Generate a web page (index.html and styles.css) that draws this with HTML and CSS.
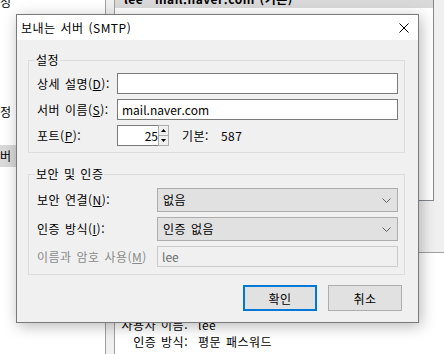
FILE: index.html
```html
<!DOCTYPE html>
<html lang="ko">

<head>
    <meta charset="UTF-8">
    <title>보내는 서버 (SMTP)</title>
    <link rel="stylesheet" href="styles.css">
</head>

<body>
    <div class="desk">
        <div class="tree">
            <div class="tree-item first">정</div>
            <div class="tree-item second">정</div>
            <div class="tree-item selected">버 (SMTP)</div>
        </div>
        <div class="splitter"></div>
        <div class="pane">
            <div class="pane-top">
                <div class="list">
                    <div class="list-row"><span class="col-user">lee</span><span>mail.naver.com (기본)</span></div>
                </div>
            </div>
            <div class="props">
                <span class="prop-label">사용자 이름:</span><span>lee</span>
                <span class="prop-label">인증 방식:</span><span>평문 패스워드</span>
            </div>
        </div>
    </div>

    <div class="dialog">
        <div class="titlebar">
            <span class="title">보내는 서버 (SMTP)</span>
            <svg class="close" width="10" height="10" viewBox="0 0 10 10">
                <path d="M0.5 0.5 L9.5 9.5 M9.5 0.5 L0.5 9.5" stroke="#000" stroke-width="1" fill="none" />
            </svg>
        </div>
        <div class="dialog-body">
            <fieldset class="group first-group">
                <legend>설정</legend>
                <div class="rows narrow">
                    <label>상세 설명(<u>D</u>):</label>
                    <div class="textbox"></div>
                    <label>서버 이름(<u>S</u>):</label>
                    <div class="textbox">mail.naver.com</div>
                    <label>포트(<u>P</u>):</label>
                    <div class="port-row">
                        <div class="textbox port">25</div>
                        <div class="spinner">
                            <div class="spin-btn">
                                <svg width="5" height="3" viewBox="0 0 5 3"><path d="M0 3 L2.5 0 L5 3 Z" fill="#000" /></svg>
                            </div>
                            <div class="spin-btn">
                                <svg width="5" height="3" viewBox="0 0 5 3"><path d="M0 0 L2.5 3 L5 0 Z" fill="#000" /></svg>
                            </div>
                        </div>
                        <span class="default-label">기본:</span>
                        <span>587</span>
                    </div>
                </div>
            </fieldset>

            <fieldset class="group second-group">
                <legend>보안 및 인증</legend>
                <div class="rows wide">
                    <label>보안 연결(<u>N</u>):</label>
                    <div class="combo">
                        <span>없음</span>
                        <svg width="9" height="5" viewBox="0 0 9 5"><path d="M0.5 0.5 L4.5 4.5 L8.5 0.5" stroke="#606060" fill="none" /></svg>
                    </div>
                    <label>인증 방식(<u>I</u>):</label>
                    <div class="combo">
                        <span>인증 없음</span>
                        <svg width="9" height="5" viewBox="0 0 9 5"><path d="M0.5 0.5 L4.5 4.5 L8.5 0.5" stroke="#606060" fill="none" /></svg>
                    </div>
                    <label class="disabled">이름과 암호 사용(<u>M</u>)</label>
                    <div class="textbox disabled">lee</div>
                </div>
            </fieldset>

            <div class="buttons">
                <button class="btn default">확인</button>
                <button class="btn">취소</button>
            </div>
        </div>
    </div>
</body>

</html>
```

FILE: styles.css
```css
body {
    margin: 0;
    width: 444px;
    height: 354px;
    overflow: hidden;
    position: relative;
    font-family: "Noto Sans CJK KR", "Noto Sans", sans-serif;
    font-size: 12px;
    line-height: 16px;
    letter-spacing: 0.5px;
    word-spacing: 1px;
    color: #000;
    background-color: #fff;
}

/* window behind the dialog */
.desk {
    display: flex;
    height: 354px;
}

.tree {
    width: 105px;
    background-color: #fff;
    overflow: hidden;
}

.tree-item {
    height: 20px;
    line-height: 20px;
    white-space: nowrap;
}

.tree-item.first {
    margin-top: -8px;
}

.tree-item.second {
    margin-top: 90px;
}

.tree-item.selected {
    margin-top: 23px;
    height: 22px;
    line-height: 22px;
    background-color: #d9d9d9;
}

.splitter {
    width: 8px;
    background-color: #f0f0f0;
    border-left: 1px solid #a0a0a0;
    border-right: 1px solid #a0a0a0;
}

.pane {
    flex: 1;
    display: flex;
    flex-direction: column;
}

.pane-top {
    height: 252px;
    background-color: #f0f0f0;
    border-bottom: 1px solid #a0a0a0;
}

.list {
    width: 318px;
    height: 211px;
    background-color: #fff;
    border-right: 1px solid #828790;
    border-bottom: 1px solid #828790;
}

.list-row {
    display: flex;
    margin-top: -11px;
    height: 19px;
    line-height: 20px;
    padding-left: 9px;
    background-color: #d9d9d9;
    font-weight: bold;
    white-space: nowrap;
}

.col-user {
    width: 31px;
}

.props {
    display: grid;
    grid-template-columns: 73px auto;
    column-gap: 10px;
    row-gap: 1px;
    margin-top: 64px;
    white-space: nowrap;
}

.prop-label {
    text-align: right;
}

/* dialog */
.dialog {
    position: absolute;
    left: 16px;
    top: 14px;
    width: 401px;
    height: 307px;
    border: 1px solid #7a7a7a;
    background-color: #f0f0f0;
    box-shadow: 2px 3px 14px rgba(0, 0, 0, 0.28);
}

.titlebar {
    height: 25px;
    background-color: #fff;
    display: flex;
    align-items: center;
    justify-content: space-between;
    padding-left: 4px;
    padding-right: 9px;
}

.close {
    display: block;
}

.dialog-body {
    padding: 0 13px 0 11px;
}

.group {
    margin: 0;
    border: 1px solid #dcdcdc;
    padding: 5px 6px 6px 8px;
    min-width: 0;
}

.group legend {
    padding: 0 1px;
    margin-left: -2px;
    line-height: 16px;
}

.first-group {
    margin-top: 12px;
}

.second-group {
    margin-top: 13px;
    padding-top: 6px;
    padding-bottom: 7px;
}

.rows {
    display: grid;
    row-gap: 5px;
    align-items: center;
}

.rows.narrow {
    grid-template-columns: 80px 1fr;
}

.rows.wide {
    grid-template-columns: 120px 1fr;
}

label {
    white-space: nowrap;
}

label.disabled {
    color: #8a8a8a;
}

.textbox {
    height: 19px;
    line-height: 19px;
    border: 1px solid #7a7a7a;
    background-color: #fff;
    padding: 0 4px;
    letter-spacing: 0;
}

.textbox.disabled {
    border-color: #cccccc;
    background-color: #f0f0f0;
    color: #6d6d6d;
}

.port-row {
    display: flex;
    align-items: center;
}

.textbox.port {
    width: 31px;
    text-align: right;
    border-right: none;
    padding: 0 0 0 9px;
}

.spinner {
    display: flex;
    flex-direction: column;
    height: 21px;
    width: 11px;
}

.spin-btn {
    flex: 1;
    border: 1px solid #adadad;
    background-color: #efefef;
    display: flex;
    align-items: center;
    justify-content: center;
}

.spin-btn + .spin-btn {
    border-top: none;
}

.default-label {
    margin-left: 13px;
    margin-right: 12px;
}

.combo {
    height: 22px;
    border: 1px solid #adadad;
    background-color: #e1e1e1;
    display: flex;
    align-items: center;
    justify-content: space-between;
    padding: 0 6px 0 5px;
}

.combo svg {
    display: block;
}

.buttons {
    display: flex;
    justify-content: flex-end;
    gap: 11px;
    margin-top: 10px;
    margin-right: 3px;
}

.btn {
    width: 74px;
    height: 26px;
    border: 1px solid #adadad;
    background-color: #e1e1e1;
    font-family: inherit;
    font-size: 12px;
    letter-spacing: 0.5px;
    color: #000;
    padding: 0;
}

.btn.default {
    border: 2px solid #0078d7;
}
```
